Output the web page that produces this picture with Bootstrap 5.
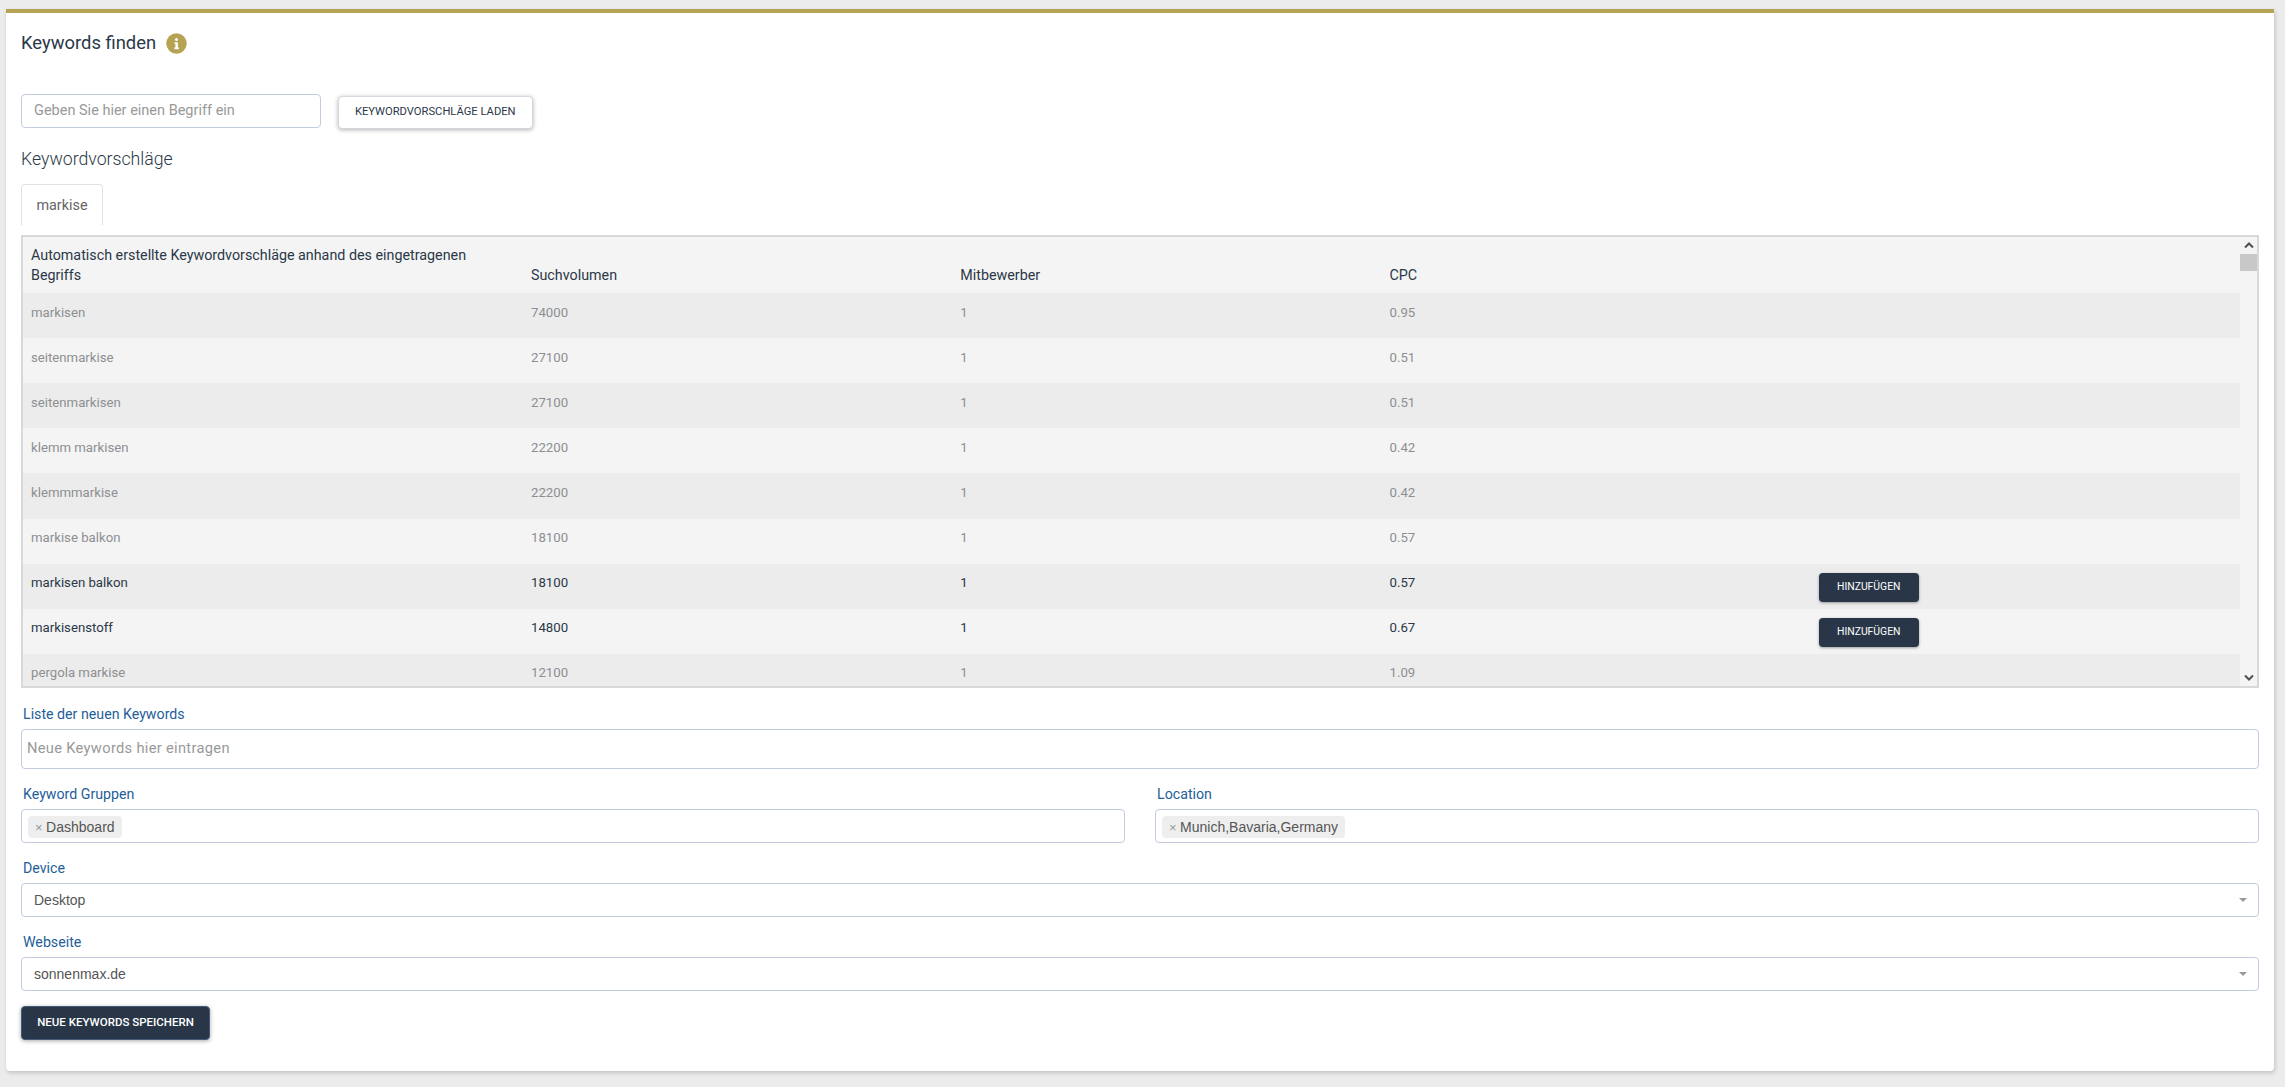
<!DOCTYPE html>
<html lang="de">
<head>
<meta charset="utf-8">
<title>Keywords finden</title>
<link href="https://cdn.jsdelivr.net/npm/bootstrap@5.3.0/dist/css/bootstrap.min.css" rel="stylesheet">
<style>
html,body{height:100%}
body{background:#ececec;font-family:Roboto,"Liberation Sans",sans-serif;color:#2b3848;overflow:hidden}
.kw-panel{margin:9px 11px 17px 6px;border:0;border-top:4px solid #b5a252;border-radius:0 0 4px 4px;padding:17px 15px 31px 15px;background:#fff;box-shadow:1px 2px 4px rgba(0,0,0,.18)}
.kw-title{font-size:18.4px;line-height:26px;margin:0;font-weight:400;color:#2b3848}
.kw-info{width:21px;height:21px;margin-left:10px;display:block}
.kw-search{margin-top:38px;align-items:flex-start}
.kw-search .form-control{width:300px;height:33.5px;font-size:14.5px;padding:0 12px;border-color:#c3cbdf;border-radius:4px;box-shadow:none}
.form-control::placeholder{color:#999;opacity:1}
.kw-btn-light{margin:1.5px 0 0 16.5px;width:195.5px;height:33px;padding:1px 0 0;font-size:11.2px;color:#2b3848;background:#fff;border:1px solid #d5d8df;border-radius:4px;text-transform:uppercase;box-shadow:0 1px 4px rgba(0,0,0,.3)}
.kw-sub{font-size:17.7px;line-height:28px;font-weight:300;margin:16px 0 0;color:#2b3848}
.kw-tabs{margin-top:11.5px;border:0}
.kw-tabs .nav-link,.kw-tabs .nav-link.active{width:82px;height:41px;padding:2px 0 0;display:flex;align-items:center;justify-content:center;font-size:14.4px;color:#666;border:1px solid #dee2e6;border-bottom:0;border-radius:4px 4px 0 0;background:#fff}
.kw-box{margin-top:11px;height:453px;border:2px solid #d8d8d8;overflow:hidden;background:#f4f4f4}
.kw-scroll{flex:1 1 auto;overflow:hidden;min-width:0}
.kw-table{table-layout:fixed;width:100%;margin:0;font-size:13.2px;--bs-table-bg:transparent;border-collapse:collapse}
.kw-table td,.kw-table th{padding:9.5px 8px 0;line-height:20px;vertical-align:top;border:0;height:45.12px;background:transparent;box-shadow:none;color:#8d8f92;font-weight:400}
.kw-table thead th{height:56px;padding:8px;font-size:14.3px;color:#2b3848;vertical-align:bottom;background:#f4f4f4;line-height:20px}
.kw-table tbody tr:nth-child(odd) td{background:#ececec}
.kw-table tbody tr:nth-child(even) td{background:#f4f4f4}
.kw-table tr.kw-on td{color:#2b3848}
.kw-c1{width:500px}
.kw-add{display:block;width:100px;height:29px;padding:0;font-size:10.4px;color:#fff;background:#283648;border:0;border-radius:4px;text-transform:uppercase;box-shadow:0 1px 3px rgba(0,0,0,.35)}
.kw-table tr.kw-on .kw-addcell{padding-top:9px}
.kw-rail{flex:0 0 17px;width:17px;background:#f4f4f4;display:flex;flex-direction:column;align-items:stretch}
.kw-arrow{height:17px;display:flex;align-items:center;justify-content:center;flex:none}
.kw-thumb{height:17px;background:#c8c8c8;flex:none}
.kw-gap{flex:1 1 auto}
.kw-label{display:block;font-size:14.2px;line-height:20px;color:#1f6099;margin:15px 0 5px 2px}
.kw-label.kw-first{margin-top:16px}
.kw-area{display:block;height:40px;padding:8px 5px;font-size:14.7px;line-height:20px;letter-spacing:.3px;border-color:#c3cbdf;border-radius:4px;resize:none}
.kw-multi{height:33.5px;border:1px solid #c3cbdf;border-radius:4px;padding:4.5px 6px;background:#fff}
.kw-chip{display:inline-flex;align-items:center;height:22px;padding:0 7px 0 7px;background:#eee;border-radius:4px;font-family:"Liberation Sans",Arial,sans-serif;font-size:14px;color:#555}
.kw-x{color:#999;font-size:13px;margin-right:3.5px}
.kw-select{height:34px;border:1px solid #c3cbdf;border-radius:4px;padding:1px 10px 0 12px;background:#fff;font-family:"Liberation Sans",Arial,sans-serif;font-size:14px;color:#555}
.kw-caret{width:0;height:0;border-left:4px solid transparent;border-right:4px solid transparent;border-top:4px solid #999;margin-right:1px}
.kw-cols{--bs-gutter-x:30px}
.kw-save{margin-top:15px;width:189px;height:34px;padding:1px 0 0;display:block;font-size:11.5px;font-weight:500;color:#fff;background:#283648;border:1px solid #46597a;border-radius:4px;text-transform:uppercase;box-shadow:0 1px 4px rgba(0,0,0,.35)}
.kw-save:hover,.kw-add:hover{background:#283648;color:#fff}
</style>
</head>
<body>
<div class="card kw-panel">
  <div class="d-flex align-items-center">
    <h1 class="kw-title">Keywords finden</h1>
    <svg class="kw-info" viewBox="0 0 21 21" aria-hidden="true"><circle cx="10.5" cy="10.5" r="10.2" fill="#b5a252"/><circle cx="10.5" cy="6.4" r="1.5" fill="#fff"/><path d="M8.5 9.2h3.4v5.4h1v1.6H8.3v-1.6h1.1v-3.8h-.9z" fill="#fff"/></svg>
  </div>

  <div class="d-flex kw-search">
    <input type="text" class="form-control" placeholder="Geben Sie hier einen Begriff ein">
    <button type="button" class="btn kw-btn-light">Keywordvorschläge laden</button>
  </div>

  <h2 class="kw-sub">Keywordvorschläge</h2>

  <ul class="nav nav-tabs kw-tabs">
    <li class="nav-item"><a class="nav-link active" href="#">markise</a></li>
  </ul>

  <div class="d-flex kw-box">
    <div class="kw-scroll">
      <table class="table kw-table">
        <thead>
          <tr>
            <th class="kw-c1">Automatisch erstellte Keywordvorschläge anhand des eingetragenen<br>Begriffs</th>
            <th>Suchvolumen</th>
            <th>Mitbewerber</th>
            <th>CPC</th>
            <th></th>
          </tr>
        </thead>
        <tbody>
          <tr><td>markisen</td><td>74000</td><td>1</td><td>0.95</td><td></td></tr>
          <tr><td>seitenmarkise</td><td>27100</td><td>1</td><td>0.51</td><td></td></tr>
          <tr><td>seitenmarkisen</td><td>27100</td><td>1</td><td>0.51</td><td></td></tr>
          <tr><td>klemm markisen</td><td>22200</td><td>1</td><td>0.42</td><td></td></tr>
          <tr><td>klemmmarkise</td><td>22200</td><td>1</td><td>0.42</td><td></td></tr>
          <tr><td>markise balkon</td><td>18100</td><td>1</td><td>0.57</td><td></td></tr>
          <tr class="kw-on"><td>markisen balkon</td><td>18100</td><td>1</td><td>0.57</td><td class="kw-addcell"><button type="button" class="btn kw-add">Hinzufügen</button></td></tr>
          <tr class="kw-on"><td>markisenstoff</td><td>14800</td><td>1</td><td>0.67</td><td class="kw-addcell"><button type="button" class="btn kw-add">Hinzufügen</button></td></tr>
          <tr><td>pergola markise</td><td>12100</td><td>1</td><td>1.09</td><td></td></tr>
        </tbody>
      </table>
    </div>
    <div class="kw-rail">
      <div class="kw-arrow"><svg width="10" height="7" viewBox="0 0 10 7"><path d="M1 5.5 5 1.5l4 4" fill="none" stroke="#505050" stroke-width="2"/></svg></div>
      <div class="kw-thumb"></div>
      <div class="kw-gap"></div>
      <div class="kw-arrow"><svg width="10" height="7" viewBox="0 0 10 7"><path d="M1 1.5 5 5.5l4-4" fill="none" stroke="#505050" stroke-width="2"/></svg></div>
    </div>
  </div>

  <label class="kw-label kw-first">Liste der neuen Keywords</label>
  <textarea class="form-control kw-area" rows="1" placeholder="Neue Keywords hier eintragen"></textarea>

  <div class="row kw-cols">
    <div class="col-6">
      <label class="kw-label">Keyword Gruppen</label>
      <div class="kw-multi"><span class="kw-chip"><span class="kw-x">×</span>Dashboard</span></div>
    </div>
    <div class="col-6">
      <label class="kw-label">Location</label>
      <div class="kw-multi"><span class="kw-chip"><span class="kw-x">×</span>Munich,Bavaria,Germany</span></div>
    </div>
  </div>

  <label class="kw-label">Device</label>
  <div class="kw-select d-flex align-items-center justify-content-between"><span>Desktop</span><span class="kw-caret"></span></div>

  <label class="kw-label">Webseite</label>
  <div class="kw-select d-flex align-items-center justify-content-between"><span>sonnenmax.de</span><span class="kw-caret"></span></div>

  <button type="button" class="btn kw-save">Neue Keywords speichern</button>
</div>
<script src="https://cdn.jsdelivr.net/npm/bootstrap@5.3.0/dist/js/bootstrap.bundle.min.js"></script>
</body>
</html>
